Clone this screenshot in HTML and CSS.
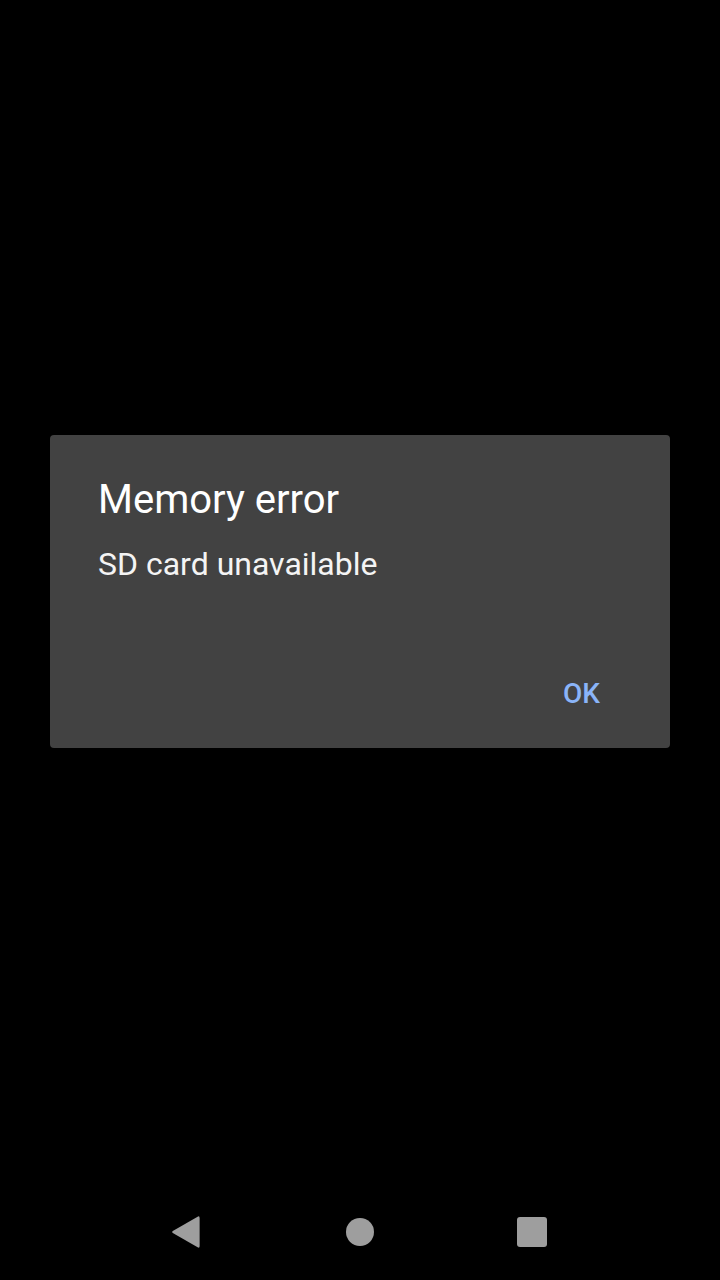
FILE: index.html
```html
<!DOCTYPE html>
<html>
<head>
<meta charset="utf-8">
<link rel="stylesheet" href="styles.css">
</head>
<body>
<div class="screen">
  <main class="stage">
    <div class="dialog">
      <h1 class="title">Memory error</h1>
      <p class="message">SD card unavailable</p>
      <div class="actions">
        <button class="btn">OK</button>
      </div>
    </div>
  </main>
  <nav class="navbar">
    <div class="navbtn">
      <svg width="48" height="48" viewBox="0 0 48 48"><path d="M9.8 23 L34.6 8.7 Q36.6 7.6 36.6 9.9 L36.6 38.1 Q36.6 40.4 34.6 39.3 L9.8 25 Q8.2 24 9.8 23 Z" fill="#9e9e9e"/></svg>
    </div>
    <div class="navbtn">
      <svg width="48" height="48" viewBox="0 0 48 48"><circle cx="24" cy="24" r="14" fill="#9e9e9e"/></svg>
    </div>
    <div class="navbtn">
      <svg width="48" height="48" viewBox="0 0 48 48"><rect x="9" y="9" width="30" height="30" rx="3" fill="#9e9e9e"/></svg>
    </div>
  </nav>
</div>
</body>
</html>
```
FILE: styles.css
```css
* { box-sizing: border-box; }
html, body {
  margin: 0;
  padding: 0;
  background: #000;
}
.screen {
  width: 720px;
  height: 1280px;
  display: flex;
  flex-direction: column;
  font-family: Roboto, "Noto Sans", sans-serif;
}
.stage {
  flex: 1;
  padding-top: 435px;
  display: flex;
  flex-direction: column;
  align-items: center;
}
.dialog {
  width: 620px;
  height: 313px;
  background: #424242;
  border-radius: 4px;
  padding: 41px 0 0 48px;
  display: flex;
  flex-direction: column;
}
.title {
  margin: 0;
  font-size: 40px;
  font-weight: 400;
  line-height: 48px;
  color: #ffffff;
}
.message {
  margin: 20px 0 0 0;
  font-size: 32px;
  line-height: 40px;
  color: #f4f4f4;
}
.actions {
  margin-top: auto;
  display: flex;
  justify-content: flex-end;
  padding: 0 54px 18px 0;
}
.btn {
  background: transparent;
  border: 0;
  padding: 0 16px;
  height: 72px;
  line-height: 72px;
  font-family: Roboto, "Noto Sans", sans-serif;
  font-size: 28px;
  font-weight: 500;
  color: #8ab4f8;
  text-transform: uppercase;
}
.navbar {
  height: 96px;
  display: flex;
  justify-content: center;
  align-items: center;
}
.navbtn {
  width: 172px;
  display: flex;
  justify-content: center;
  align-items: center;
}
.navbtn:first-child { padding-right: 2px; }
```
